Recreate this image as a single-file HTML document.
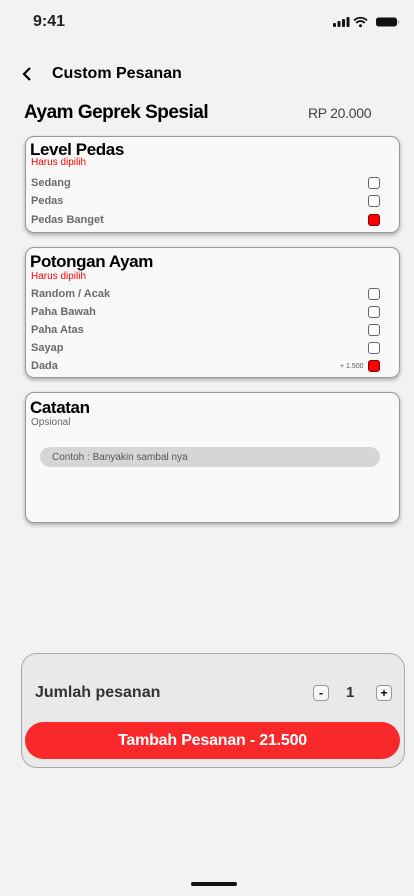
<!DOCTYPE html>
<html><head><meta charset="utf-8"><style>
*{margin:0;padding:0;box-sizing:border-box}
body{width:414px;height:896px;background:#f2f2f2;font-family:"Liberation Sans",sans-serif;position:relative;overflow:hidden;border-radius:28px}
.a{position:absolute;white-space:nowrap}
.card{position:absolute;left:25px;width:375px;background:#f9f9f9;border:1px solid #999;border-radius:9px;box-shadow:0 2px 4px rgba(0,0,0,.3)}
.t{font-weight:bold;font-size:17px;color:#000;left:4px;letter-spacing:-0.4px}
.r{color:#f00;font-size:10px;left:5px}
.o{color:#6b6b6b;font-size:11px;font-weight:bold;left:5px}
.cb{position:absolute;left:342px;width:12px;height:12px;border:1px solid #666;border-radius:3px;background:#fff}
.cb.on{background:#f00;border-color:#800}
</style></head><body>
<div class="a" style="left:33px;top:13px;font-size:16px;font-weight:bold;color:#222">9:41</div>
<svg class="a" style="left:333px;top:16px" width="66" height="12" viewBox="0 0 66 12">
<rect x="0" y="7" width="3" height="4" rx="1" fill="#111"/><rect x="4.5" y="5" width="3" height="6" rx="1" fill="#111"/><rect x="9" y="3" width="3" height="8" rx="1" fill="#111"/><rect x="13.5" y="1" width="3" height="10" rx="1" fill="#111"/>
<path d="M21 4.5a9 9 0 0 1 13 0M23.3 7a5.5 5.5 0 0 1 8.4 0" stroke="#111" stroke-width="1.8" fill="none"/><circle cx="27.5" cy="9.8" r="1.5" fill="#111"/>
<rect x="43" y="1.5" width="21" height="9" rx="2.5" fill="#111"/><rect x="65" y="4.5" width="1.2" height="3" fill="#888"/></svg>
<svg class="a" style="left:22px;top:67px" width="10" height="14"><path d="M8 1L2 7l6 6" stroke="#000" stroke-width="2.2" fill="none"/></svg>
<div class="a" style="left:52px;top:65px;font-size:16px;font-weight:bold">Custom Pesanan</div>
<div class="a" style="left:24px;top:102px;font-size:19px;font-weight:bold;letter-spacing:-0.5px">Ayam Geprek Spesial</div>
<div class="a" style="left:308px;top:105px;font-size:14px;color:#444;letter-spacing:-0.3px">RP 20.000</div>

<div class="card" style="top:136px;height:97px">
<div class="a t" style="top:3px">Level Pedas</div>
<div class="a r" style="top:20px">Harus dipilih</div>
<div class="a o" style="top:40px">Sedang</div><div class="cb" style="top:40px"></div>
<div class="a o" style="top:58px">Pedas</div><div class="cb" style="top:58px"></div>
<div class="a o" style="top:77px">Pedas Banget</div><div class="cb on" style="top:77px"></div>
</div>

<div class="card" style="top:247px;height:131px">
<div class="a t" style="top:4px">Potongan Ayam</div>
<div class="a r" style="top:23px">Harus dipilih</div>
<div class="a o" style="top:40px">Random / Acak</div><div class="cb" style="top:40px"></div>
<div class="a o" style="top:58px">Paha Bawah</div><div class="cb" style="top:58px"></div>
<div class="a o" style="top:76px">Paha Atas</div><div class="cb" style="top:76px"></div>
<div class="a o" style="top:94px">Sayap</div><div class="cb" style="top:94px"></div>
<div class="a o" style="top:112px">Dada</div>
<div class="a" style="left:314px;top:115px;font-size:7px;color:#555">+ 1.500</div>
<div class="cb on" style="top:112px"></div>
</div>

<div class="card" style="top:392px;height:131px">
<div class="a t" style="top:5px">Catatan</div>
<div class="a" style="left:5px;top:24px;font-size:10px;color:#666">Opsional</div>
<div class="a" style="left:14px;top:54px;width:340px;height:20px;border-radius:10px;background:#d6d6d6;font-size:10px;color:#555;padding:5px 0 0 12px">Contoh : Banyakin sambal nya</div>
</div>

<div class="a" style="left:21px;top:653px;width:384px;height:115px;background:#e9e9e9;border:1px solid #aaa;border-radius:16px"></div>
<div class="a" style="left:35px;top:684px;font-size:16px;font-weight:bold;color:#333">Jumlah pesanan</div>
<div class="a" style="left:313px;top:685px;width:16px;height:16px;border:1px solid #999;border-radius:4px;background:#f7f7f7;font-size:12px;font-weight:bold;text-align:center;line-height:14px">-</div>
<div class="a" style="left:346px;top:684px;font-size:15px;font-weight:bold;color:#333">1</div>
<div class="a" style="left:376px;top:685px;width:16px;height:16px;border:1px solid #999;border-radius:4px;background:#f7f7f7;font-size:12px;font-weight:bold;text-align:center;line-height:14px">+</div>
<div class="a" style="left:25px;top:722px;width:375px;height:37px;border-radius:19px;background:#f9292b;color:#fff;font-size:16px;font-weight:bold;text-align:center;line-height:37px;letter-spacing:-0.2px">Tambah Pesanan - 21.500</div>

<div class="a" style="left:191px;top:882px;width:46px;height:4px;border-radius:2px;background:#111"></div>
</body></html>
